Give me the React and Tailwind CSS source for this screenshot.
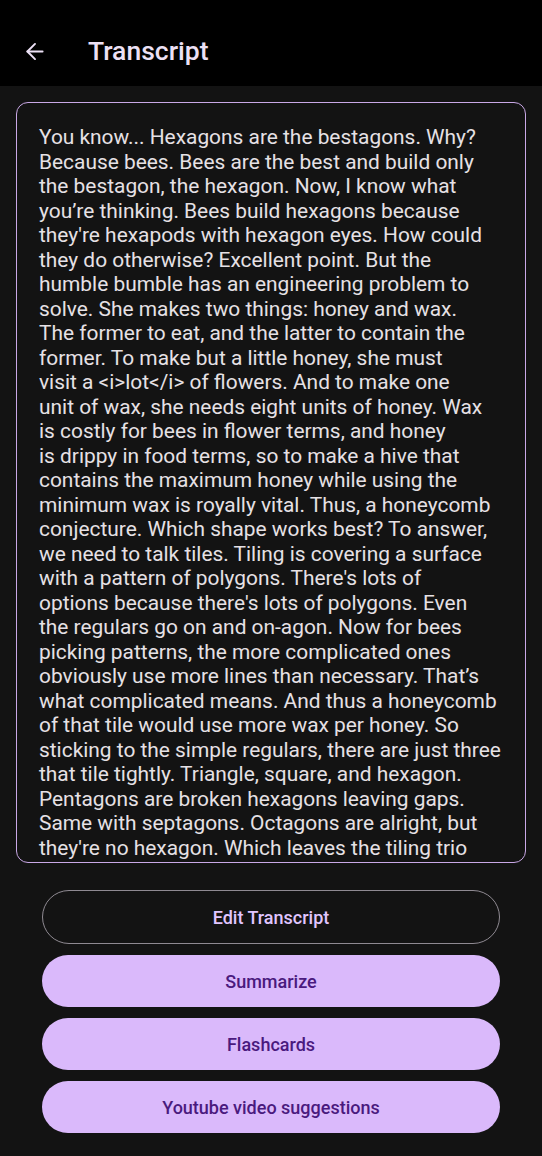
import { ArrowLeft } from "lucide-react";

// line breaks follow the screenshot
const lines = [
  "You know... Hexagons are the bestagons. Why?",
  "Because bees. Bees are the best and build only",
  "the bestagon, the hexagon. Now, I know what",
  "you\u2019re thinking. Bees build hexagons because",
  "they're hexapods with hexagon eyes. How could",
  "they do otherwise? Excellent point. But the",
  "humble bumble has an engineering problem to",
  "solve. She makes two things: honey and wax.",
  "The former to eat, and the latter to contain the",
  "former. To make but a little honey, she must",
  "visit a <i>lot</i> of flowers. And to make one",
  "unit of wax, she needs eight units of honey. Wax",
  "is costly for bees in flower terms, and honey",
  "is drippy in food terms, so to make a hive that",
  "contains the maximum honey while using the",
  "minimum wax is royally vital. Thus, a honeycomb",
  "conjecture. Which shape works best? To answer,",
  "we need to talk tiles. Tiling is covering a surface",
  "with a pattern of polygons. There's lots of",
  "options because there's lots of polygons. Even",
  "the regulars go on and on-agon. Now for bees",
  "picking patterns, the more complicated ones",
  "obviously use more lines than necessary. That\u2019s",
  "what complicated means. And thus a honeycomb",
  "of that tile would use more wax per honey. So",
  "sticking to the simple regulars, there are just three",
  "that tile tightly. Triangle, square, and hexagon.",
  "Pentagons are broken hexagons leaving gaps.",
  "Same with septagons. Octagons are alright, but",
  "they're no hexagon. Which leaves the tiling trio",
];

const actions = ["Summarize", "Flashcards", "Youtube video suggestions"];

export default function App() {
  return (
    <div
      className="w-[542px] h-[1156px] bg-[#131313] flex flex-col overflow-hidden"
      style={{ fontFamily: "Roboto, 'Liberation Sans', sans-serif" }}
    >
      {/* header */}
      <div className="h-[86px] bg-black flex items-center pt-[16px] shrink-0">
        <button className="ml-[22px] w-[26px] h-[26px] flex items-center justify-center text-[#ece0f5]">
          <ArrowLeft size={27} strokeWidth={1.8} />
        </button>
        <h1 className="ml-[40px] text-[26.5px] font-medium text-[#ece0f5]">Transcript</h1>
      </div>

      {/* transcript box */}
      <div className="mx-[16px] mt-[16px] h-[761px] border border-[#c9a8e6] rounded-[12px] overflow-hidden pl-[22px] pr-[4px] pt-[22px] shrink-0">
        <div className="text-[20.9px] leading-[24.5px] text-[#e6e1e5]">
          {lines.map((line, i) => (
            <div key={i} className="whitespace-nowrap">
              {line}
            </div>
          ))}
        </div>
      </div>

      {/* actions */}
      <div className="mx-[42px] mt-[27px] flex flex-col gap-[11px]">
        <button className="h-[54px] rounded-full border border-[#8f8a92] text-[18px] font-medium text-[#e0c5ff]">
          Edit Transcript
        </button>
        {actions.map((label) => (
          <button
            key={label}
            className="h-[52px] rounded-full bg-[#dab9fb] text-[18px] font-medium text-[#4a1a7e]"
          >
            {label}
          </button>
        ))}
      </div>
    </div>
  );
}
